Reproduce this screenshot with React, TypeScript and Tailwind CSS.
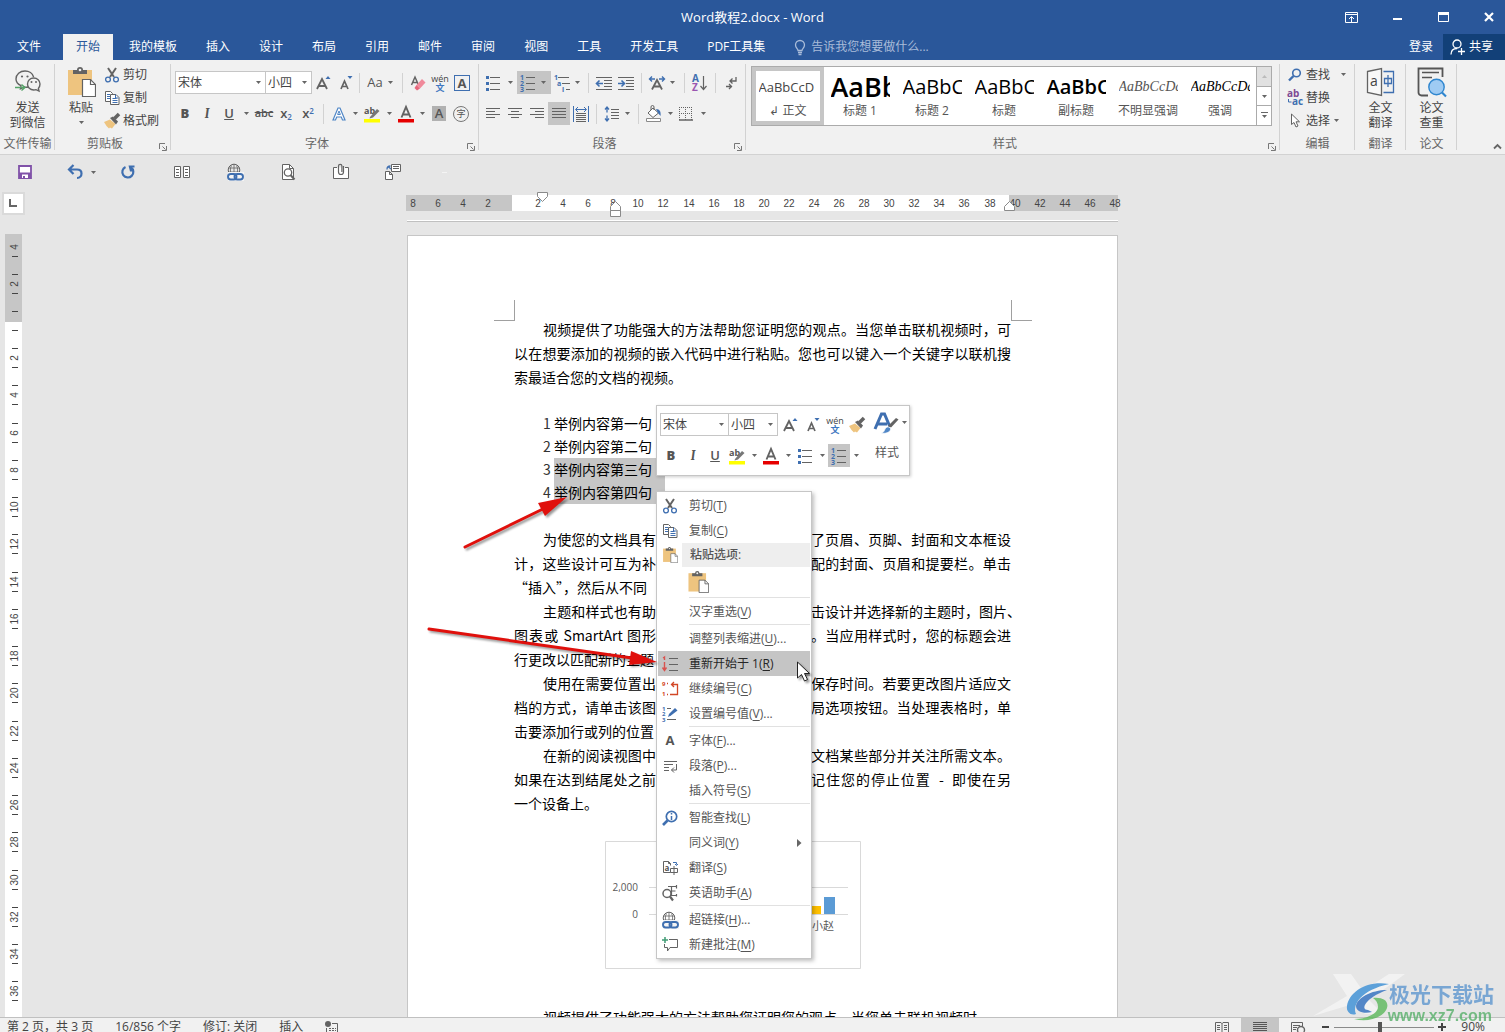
import React from 'react';
import clsx from 'clsx';

type IconProps = { w?: number; h?: number; children: React.ReactNode };

const Svg = ({ w = 16, h = 16, children }: IconProps) => (
  <svg width={w} height={h} viewBox={`0 0 ${w} ${h}`} fill="none" className="shrink-0 overflow-visible" aria-hidden="true">
    {children}
  </svg>
);

const GREY = '#636363';
const BLUE = '#3f6fb0';

/* ---------- Icons ---------- */

const ScissorsIcon = () => (
  <Svg>
    <path d="M4 1l6 9M12 1L6 10" stroke={GREY} strokeWidth="2" />
    <circle cx="4" cy="12.5" r="2.4" stroke={BLUE} strokeWidth="1.3" />
    <circle cx="12" cy="12.5" r="2.4" stroke={BLUE} strokeWidth="1.3" />
  </Svg>
);

const CopyIcon = () => (
  <Svg>
    <path d="M1.5 1.5h5l2 2v8h-7z" fill="#fff" stroke={GREY} />
    <path d="M3 4.5h3M3 6.5h3M3 8.500h3" stroke={BLUE} />
    <path d="M6.500 4.500h5.500l3 3v7h-8.500z" fill="#fff" stroke={GREY} />
    <path d="M11.500 4.500v3.500h3M8.500 8.500h4M8.500 10.500h5M8.500 12.500h5" stroke={BLUE} />
  </Svg>
);

const BrushIcon = () => (
  <Svg>
    <path d="M0 9l6-2.500 5.500 4.500-3.500 4.500-2-1-1 1-2.500-2.500z" fill="#eec47f" />
    <path d="M6 5l3-1.500 5 5-2 3z" fill={GREY} />
    <path d="M10.500 5.500L15 1" stroke={GREY} strokeWidth="3.500" />
  </Svg>
);

const PasteIcon = ({ size = 30 }: { size?: number }) => (
  <svg width={size} height={size} viewBox="0 0 30 30" fill="none" className="shrink-0" aria-hidden="true">
    <path d="M2 3h24v25H2z" fill="#eec47f" />
    <path d="M7 3h4a3 3 0 0 1 6 0h4v4H7z" fill={GREY} />
    <circle cx="14" cy="3" r="1.300" fill="#f1f1f1" />
    <path d="M16.500 12.500h8l5 5v12h-13z" fill="#fff" stroke={GREY} strokeWidth="1.200" />
    <path d="M24.500 12.500v5h5" stroke={GREY} strokeWidth="1.200" />
  </svg>
);

const WechatIcon = () => (
  <Svg w={28} h={26}>
    <path d="M14 18c-1 .3-3 .3-4 0l-3.500 1.700.5-3C3.500 15 2 12.500 2 10c0-4.500 4-8 9-8 4 0 7.600 2.400 8.600 6" stroke={GREY} strokeWidth="1.400" />
    <path d="M26 15c0-3.600-2.800-6-6.300-6S13.500 11.500 13.500 15s2.700 6 6.200 6c.8 0 1.500 0 2.300-.3L25 22l-.6-2.600C25.500 18 26 17 26 15z" stroke={GREY} strokeWidth="1.400" />
    <circle cx="8" cy="7.500" r="1.100" fill={GREY} />
    <circle cx="13.500" cy="7.500" r="1.100" fill={GREY} />
    <circle cx="17.500" cy="13" r="1" fill={GREY} />
    <circle cx="22" cy="13" r="1" fill={GREY} />
    <path d="M1 18.500h9M7.500 15.500l3.500 3-3.500 3" stroke="#55a468" strokeWidth="1.400" />
  </Svg>
);

const EraserIcon = () => (
  <Svg>
    <path d="M1.500 10L5 2l3.500 8M2.800 7.500h4.500" stroke={GREY} strokeWidth="1.500" />
    <path d="M6.500 10L12 4l3.500 3.500L10 13.500z" fill="#f08a9b" />
    <path d="M6.500 10l-2 3 2.500 2.500 3-2z" fill="#e7667c" />
  </Svg>
);

const Pinyin = () => (
  <span className="flex flex-col items-center text-[9px] font-normal leading-[9px] text-[#444]">
    <span>wén</span>
    <span className="font-bold text-[#3f78c0]">文</span>
  </span>
);

const GrowFont = () => (
  <Svg>
    <path d="M1 14L6 4l5 10M3 11h6" stroke={GREY} strokeWidth="1.800" />
    <path d="M9.500 4L12 1l2.500 3z" fill={BLUE} />
  </Svg>
);

const ShrinkFont = () => (
  <Svg>
    <path d="M3 14l3.500-8L10 14M4.500 11.500h4" stroke={GREY} strokeWidth="1.700" />
    <path d="M9.500 1L12 4l2.500-3z" fill={BLUE} />
  </Svg>
);

const BoxedA = () => (
  <span className="flex h-4 w-4 items-center justify-center border border-[#3f6fb0] text-[13px] font-bold leading-[14px]">A</span>
);

const OutlineA = () => (
  <Svg>
    <path d="M2 14L7 2h2l5 12h-2.500l-1.200-3H5.700l-1.200 3z" stroke="#4f86c6" strokeWidth="1.200" fill="#fff" />
    <path d="M6.600 8.500h2.800L8 5z" stroke="#4f86c6" />
  </Svg>
);

const HighlightIcon = () => (
  <Svg w={18} h={18}>
    <text x="1" y="9" fontSize="9" fontWeight="700" fill="#555">ab</text>
    <path d="M7 12l7-8 2.500 2L10 12.500l-3.500 1z" fill="#777" />
    <path d="M1 14h16v3.500H1z" fill="#ff0" />
  </Svg>
);

const FontColorIcon = () => (
  <Svg w={18} h={18}>
    <path d="M4.500 12.500L9 2l4.500 10.500M6.200 9.500h5.600" stroke={GREY} strokeWidth="1.900" />
    <path d="M1 14h16v3.500H1z" fill="#e60000" />
  </Svg>
);

const BulletsIcon = () => (
  <Svg>
    <path d="M5 2.500h10M5 8.500h10M5 14.500h10" stroke={GREY} />
    <path d="M1 1h3v3H1zM1 7h3v3H1zM1 13h3v3H1z" fill={BLUE} />
  </Svg>
);

const NumberingIcon = () => (
  <Svg w={18} h={18}>
    <path d="M7 3.500h9M7 9.500h9M7 15.500h9" stroke={GREY} />
    <g fontSize="7" fontWeight="700" fill={BLUE}>
      <text x="1" y="6">1</text>
      <text x="1" y="12">2</text>
      <text x="1" y="18">3</text>
    </g>
  </Svg>
);

const MultilevelIcon = () => (
  <Svg w={18} h={18}>
    <path d="M5 3.500h11M9 9.500h8M13 15.500h4" stroke={GREY} />
    <g fontSize="7" fontWeight="700" fill={BLUE}>
      <text x="1" y="6">1</text>
      <text x="4" y="12">a</text>
      <text x="9" y="18">i</text>
    </g>
  </Svg>
);

const IndentIcon = ({ out }: { out?: boolean }) => (
  <Svg w={18} h={16}>
    <path d="M1 2.500h16M9 5.500h8M9 8.500h8M9 11.500h8M1 14.500h16" stroke={GREY} />
    <path d={out ? 'M8 8.500H2M4.500 5.500l-3 3 3 3' : 'M1 8.500h6M4.500 5.500l3 3-3 3'} stroke={BLUE} strokeWidth="1.600" />
  </Svg>
);

const AsianLayoutIcon = () => (
  <Svg w={18} h={16}>
    <path d="M4 14.500L9 5l5 9.500M6 11.500h6" stroke={GREY} strokeWidth="1.800" />
    <path d="M7 4H2M4 1.500L1.500 4 4 6.500M11 4h5M14 1.500L16.500 4 14 6.500" stroke={BLUE} strokeWidth="1.400" />
  </Svg>
);

const SortIcon = () => (
  <Svg w={16} h={18}>
    <text x="0" y="8" fontSize="10" fontWeight="700" fill={BLUE}>A</text>
    <text x="0" y="17" fontSize="10" fontWeight="700" fill="#9a56b0">Z</text>
    <path d="M11.500 2v13M8.500 12l3 3.500 3-3.500" stroke={GREY} strokeWidth="1.200" />
  </Svg>
);

const MarksIcon = () => (
  <Svg w={12} h={14}>
    <path d="M11 1v4H5M7.500 2.500L5 5l2.500 2.500M1 10.500h6M4 8l2.500 2.500L4 13" stroke={GREY} strokeWidth="1.300" />
  </Svg>
);

const ALIGN_PATHS = {
  left: 'M1 2.500h14M1 5.500h9M1 8.500h14M1 11.500h9',
  center: 'M1 2.500h14M4 5.500h8M1 8.500h14M4 11.500h8',
  right: 'M1 2.500h14M6 5.500h9M1 8.500h14M6 11.500h9',
  justify: 'M1 2.500h14M1 5.500h14M1 8.500h14M1 11.500h14',
};

const AlignIcon = ({ kind }: { kind: keyof typeof ALIGN_PATHS }) => (
  <Svg h={15}>
    <path d={ALIGN_PATHS[kind]} stroke={GREY} />
  </Svg>
);

const DistributeIcon = () => (
  <Svg>
    <path d="M.5 0v16M15.500 0v16" stroke={BLUE} />
    <path d="M3 7.500h10M3 9.500h10M3 11.500h10M3 13.500h10M3 15.500h10" stroke={GREY} />
    <path d="M3 3.500h10M5 1L2.500 3.500 5 6M11 1l2.500 2.500L11 6" stroke={BLUE} />
  </Svg>
);

const LineSpacingIcon = () => (
  <Svg>
    <path d="M7 3.500h8M7 6.500h8M7 9.500h8M7 12.500h8" stroke={GREY} />
    <path d="M3 1v5.500M1 3.500L3 1l2 2.500M3 9.500V15M1 12.500L3 15l2-2.500" stroke={BLUE} strokeWidth="1.300" />
  </Svg>
);

const BucketIcon = () => (
  <Svg w={18} h={17}>
    <path d="M3 8l5-5 5.500 5-5.500 4.500z" fill="#fff" stroke={GREY} />
    <path d="M6 5V2a1.500 1.500 0 0 1 3 0v3" stroke={GREY} />
    <path d="M11 4c4 0 5 3 4.500 7L13 8z" fill={BLUE} />
    <path d="M1.500 13.500h14v3h-14z" fill="#fff" stroke="#8a8a8a" />
  </Svg>
);

const BordersIcon = () => (
  <Svg w={14} h={14}>
    <path d="M.5 0v13M6.500 0v13M12.500 0v13M0 .5h13M0 6.500h13" stroke={GREY} strokeDasharray="1 1" />
    <path d="M0 13h14" stroke={GREY} strokeWidth="1.500" />
  </Svg>
);

const MagnifierIcon = () => (
  <Svg w={14} h={14}>
    <circle cx="8.500" cy="5" r="3.800" stroke={BLUE} strokeWidth="1.600" />
    <path d="M5.500 8L1 12.500" stroke={BLUE} strokeWidth="2.400" />
  </Svg>
);

const ReplaceIcon = () => (
  <Svg w={17} h={17}>
    <g fontSize="10" fontWeight="700">
      <text x="0" y="8" fill="#7e4a94">ab</text>
      <text x="5" y="16" fill={BLUE}>ac</text>
    </g>
    <path d="M1.500 10v3h3" stroke={BLUE} />
  </Svg>
);

const PointerIcon = () => (
  <Svg w={11} h={15}>
    <path d="M1.500 1v10.500l2.500-2 2 4.500 2-1-2-4.200h3.500z" fill="#fff" stroke={GREY} />
  </Svg>
);

const TranslateIcon = () => (
  <Svg w={30} h={30}>
    <path d="M1.500 4.500l14-3v27l-14-3z" fill="#f8f8f8" stroke={GREY} strokeWidth="1.300" />
    <text x="4" y="19" fontSize="14" fill="#444">a</text>
    <path d="M17.500 4.500h10v21h-10" stroke={BLUE} strokeWidth="1.300" />
    <path d="M18.500 11.500h7v5h-7zM22 8v12" stroke={BLUE} strokeWidth="1.300" />
  </Svg>
);

const PaperCheckIcon = () => (
  <Svg w={30} h={30}>
    <path d="M11 28.500H4.500a3 3 0 0 1-3-3v-24h24V10" stroke="#555" strokeWidth="1.800" />
    <path d="M5 5.500h17M5 10.500h10" stroke="#555" strokeWidth="1.500" />
    <circle cx="19.500" cy="20" r="7.700" fill="#9fcbf3" stroke="#2f86cf" strokeWidth="1.400" />
    <path d="M25 25.500l4 4" stroke="#2f86cf" strokeWidth="2.200" />
  </Svg>
);

const LauncherIcon = () => (
  <Svg w={8} h={8}>
    <path d="M.5 6V.5H6M3.500 3.500L6.500 6.500M7.500 3v4.500H3" stroke="#777" />
  </Svg>
);

const LinkGlobeIcon = () => (
  <Svg w={18} h={18}>
    <circle cx="8" cy="7" r="5.800" stroke={GREY} />
    <path d="M2.500 5h11M2.500 9h11M8 1v12M5.500 2.500C4 5 4 9 5.500 11.500M10.500 2.500C12 5 12 9 10.500 11.500" stroke={GREY} strokeWidth=".8" />
    <path d="M2 9h16v9H2z" fill="#f4f4f4" />
    <rect x="2" y="11" width="8.500" height="5.500" rx="2.700" stroke={BLUE} strokeWidth="1.900" />
    <rect x="8.500" y="11" width="8.500" height="5.500" rx="2.700" stroke={BLUE} strokeWidth="1.900" />
  </Svg>
);

const StyleBrushIcon = () => (
  <Svg w={28} h={24}>
    <path d="M2 18L8.500 3h3L17 16M5 13h9" stroke={BLUE} strokeWidth="3" />
    <path d="M15 15l8-8 2.500 1.500-7.500 8z" fill={GREY} />
    <path d="M8 22c4 0 3-5 6.500-6 2-.3 3.300 1 3 2.500-.5 3-5.500 4.500-9.500 3.500z" fill="#4f86c6" stroke="#fff" strokeWidth=".7" />
  </Svg>
);

/* ---------- Small controls ---------- */

const Caret = ({ className }: { className?: string }) => (
  <span className={clsx('flex h-[23px] items-center justify-center', className ?? 'w-3')}>
    <svg width="5" height="3" viewBox="0 0 5 3" aria-hidden="true">
      <path d="M0 0h5L2.500 3z" fill="#666" />
    </svg>
  </span>
);

const Sep = ({ className }: { className?: string }) => (
  <span className={clsx('h-5 w-px bg-[#d2d2d2]', className ?? 'mx-1')} />
);

type ToolProps = { label: string; active?: boolean; className?: string; children: React.ReactNode };

const Tool = ({ label, active, className, children }: ToolProps) => (
  <button
    type="button"
    aria-label={label}
    className={clsx('flex h-[23px] shrink-0 items-center justify-center', className ?? 'w-[22px]', active && 'bg-[#c5c5c5]')}
  >
    {children}
  </button>
);

const Combo = ({ label, value, className }: { label: string; value: string; className: string }) => (
  <label className={clsx('relative flex h-[23px] border border-[#c6c6c6] bg-white', className)}>
    <select
      aria-label={label}
      defaultValue={value}
      className="w-full appearance-none bg-transparent pl-[2px] text-xs font-normal leading-[21px] text-[#444] outline-none"
    >
      <option>{value}</option>
    </select>
    <span className="pointer-events-none absolute inset-y-0 right-1 flex items-center">
      <Caret className="w-[6px]" />
    </span>
  </label>
);

type GroupProps = { name: string; launcher?: boolean; className?: string; children: React.ReactNode };

const Group = ({ name, launcher, className, children }: GroupProps) => (
  <section aria-label={name} className={clsx('relative flex shrink-0 flex-col', className)}>
    <div className="h-[74px]">{children}</div>
    <div className="flex h-[19px] items-center text-[#666]">
      <span className="flex-1 whitespace-nowrap text-center">{name}</span>
      {launcher && (
        <button type="button" aria-label={`${name}设置`} className="flex h-4 w-4 items-end justify-center pb-px">
          <LauncherIcon />
        </button>
      )}
    </div>
    <span className="absolute right-0 top-1 h-[86px] w-px bg-[#d2d2d2]" />
  </section>
);

const BigButton = ({ icon, lines }: { icon: React.ReactNode; lines: string[] }) => (
  <button type="button" className="flex w-full flex-col items-center pt-[7px] leading-[15px]">
    <span className="mb-[3px] flex h-[30px] items-center">{icon}</span>
    {lines.map((line) => (
      <span key={line} className="whitespace-nowrap">{line}</span>
    ))}
  </button>
);

const SmallButton = ({ icon, text, caret }: { icon: React.ReactNode; text: string; caret?: boolean }) => (
  <button type="button" className="flex h-[23px] items-center gap-[3px] whitespace-nowrap">
    <span className="flex w-4 justify-center">{icon}</span>
    {text}
    {caret && <Caret className="w-[6px]" />}
  </button>
);

/* ---------- Header ---------- */

const tabs = ['我的模板', '插入', '设计', '布局', '引用', '邮件', '审阅', '视图', '工具', '开发工具', 'PDF工具集'];

const Header = () => (
  <header className="bg-[#2a579a] text-white">
    <div className="relative flex h-[34px] items-center justify-end overflow-hidden">
      <h1 className="absolute inset-x-0 text-center text-[13px] leading-[34px]">Word教程2.docx - Word</h1>
      <div className="relative -mr-[7px] flex">
        <button type="button" aria-label="功能区显示选项" className="flex h-8 w-[46px] items-center justify-center">
          <Svg w={13} h={11}>
            <path d="M.5.500h12v10H.5zM.5 2.500h12M6.500 10V5M4 7l2.500-2.500L9 7" stroke="#fff" />
          </Svg>
        </button>
        <button type="button" aria-label="最小化" className="flex h-8 w-[46px] items-center justify-center">
          <Svg w={9} h={10}><path d="M0 7h9" stroke="#fff" strokeWidth="2" /></Svg>
        </button>
        <button type="button" aria-label="最大化" className="flex h-8 w-[46px] items-center justify-center">
          <Svg w={11} h={10}><path d="M.5.500h10v9H.5z" stroke="#fff" /><path d="M0 0h11v3H0z" fill="#fff" /></Svg>
        </button>
        <button type="button" aria-label="关闭" className="flex h-8 w-[46px] items-center justify-center">
          <Svg w={10} h={10}><path d="M1 1l8 8M9 1L1 9" stroke="#fff" strokeWidth="2.200" /></Svg>
        </button>
      </div>
    </div>
    <div className="flex h-[26px] items-stretch whitespace-nowrap">
      <nav className="flex gap-[3px]">
        <button type="button" className="w-[60px] pr-[2px]">文件</button>
        <button type="button" className="bg-[#f1f1f1] px-[13px] text-[#2a579a]">开始</button>
        {tabs.map((tab) => (
          <button key={tab} type="button" className="px-[13px]">{tab}</button>
        ))}
      </nav>
      <label className="ml-4 flex items-center gap-[5px] text-[#a9bcd9]">
        <Svg w={12} h={15}>
          <path d="M4 10.500C4 9 1.500 8 1.500 5a4.500 4.500 0 0 1 9 0c0 3-2.500 4-2.500 5.500zM4 12.500h4M4.500 14.500h3" stroke="#a9bcd9" strokeWidth="1.300" />
        </Svg>
        <input aria-label="告诉我" placeholder="告诉我您想要做什么..." className="w-[130px] bg-transparent text-xs outline-none placeholder:text-[#a9bcd9]" />
      </label>
      <div className="ml-auto flex">
        <button type="button" className="px-[10px]">登录</button>
        <button type="button" className="flex items-center gap-1 bg-[#124078] pl-[7px] pr-3">
          <Svg w={15} h={16}>
            <circle cx="7" cy="5" r="4" stroke="#fff" strokeWidth="1.300" />
            <path d="M1 15.500c0-4 2.500-6 6-6M8 12.500h7M11.500 9v7" stroke="#fff" strokeWidth="1.300" />
          </Svg>
          共享
        </button>
      </div>
    </div>
  </header>
);

/* ---------- Ribbon ---------- */

const styleCells = [
  { name: '↲ 正文', sample: 'AaBbCcD', look: 'text-[13px]', selected: true },
  { name: '标题 1', sample: 'AaBb', look: 'text-[27px] font-semibold text-black' },
  { name: '标题 2', sample: 'AaBbC', look: 'text-[20px] text-black' },
  { name: '标题', sample: 'AaBbC', look: 'text-[20px] text-black' },
  { name: '副标题', sample: 'AaBbC', look: 'text-[20px] font-semibold text-black' },
  { name: '不明显强调', sample: 'AaBbCcDd', look: 'font-["Liberation_Serif"] text-[14px] italic text-[#555]' },
  { name: '强调', sample: 'AaBbCcDd', look: 'font-["Liberation_Serif"] text-[14px] italic text-black' },
];

const Gallery = () => (
  <div className="ml-[5px] mr-[8px] mt-[6px] flex h-[60px] border border-[#ababab] bg-white">
    <div className="flex flex-1 overflow-hidden">
      {styleCells.map((cell) => (
        <button
          key={cell.name}
          type="button"
          className={clsx('flex h-[58px] w-[72px] shrink-0 flex-col items-center', cell.selected && 'border-4 border-[#c6c6c6]')}
        >
          <span className={clsx('w-[59px] overflow-hidden whitespace-nowrap text-left leading-[34px]', cell.selected ? '-mt-px h-[32px]' : 'mt-[3px] h-[32px]', cell.look)}>
            {cell.sample}
          </span>
          <span className="whitespace-nowrap leading-[18px] text-[#555]">{cell.name}</span>
        </button>
      ))}
    </div>
    <div className="flex w-[15px] flex-col divide-y divide-[#ababab] border-l border-[#ababab]">
      <button type="button" aria-label="向上" className="flex flex-1 items-center justify-center bg-[#e1e1e1]">
        <Svg w={5} h={3}><path d="M0 3h5L2.500 0z" fill="#bbb" /></Svg>
      </button>
      <button type="button" aria-label="向下" className="flex flex-1 items-center justify-center">
        <Svg w={5} h={3}><path d="M0 0h5L2.500 3z" fill="#666" /></Svg>
      </button>
      <button type="button" aria-label="更多样式" className="flex flex-1 items-center justify-center">
        <Svg w={7} h={7}><path d="M0 .5h7" stroke="#666" /><path d="M1 3h5L3.500 6z" fill="#666" /></Svg>
      </button>
    </div>
  </div>
);

const FontGroup = () => (
  <Group name="字体" launcher className="w-[308px]">
    <div className="flex flex-col gap-2 pt-[11px] font-semibold text-[#555]">
      <div className="flex h-[23px] items-center pl-[4px]">
        <Combo label="字体" value="宋体" className="w-[91px]" />
        <Combo label="字号" value="小四" className="-ml-px w-[47px]" />
        <Tool label="增大字号" className="ml-[1px] w-[22px]"><GrowFont /></Tool>
        <Tool label="减小字号"><ShrinkFont /></Tool>
        <Sep className="ml-[2px] mr-[4px]" />
        <Tool label="更改大小写"><span className="text-[13px] font-normal">Aa</span></Tool>
        <Caret className="w-2" />
        <Sep className="ml-[8px] mr-[4px]" />
        <Tool label="清除格式"><EraserIcon /></Tool>
        <Tool label="拼音指南"><Pinyin /></Tool>
        <Tool label="字符边框"><BoxedA /></Tool>
      </div>
      <div className="flex h-[23px] items-center pl-[3px] text-[13px]">
        <Tool label="加粗"><b>B</b></Tool>
        <Tool label="倾斜"><i className="font-serif">I</i></Tool>
        <Tool label="下划线"><u>U</u></Tool>
        <Caret className="w-[13px]" />
        <Tool label="删除线"><s className="text-[11px]">abc</s></Tool>
        <Tool label="下标"><span>x<sub className="text-[8px] text-[#3f6fb0]">2</sub></span></Tool>
        <Tool label="上标"><span>x<sup className="text-[8px] text-[#3f6fb0]">2</sup></span></Tool>
        <Sep />
        <Tool label="文本效果"><OutlineA /></Tool>
        <Caret className="w-[11px]" />
        <Tool label="突出显示"><HighlightIcon /></Tool>
        <Caret />
        <Tool label="字体颜色"><FontColorIcon /></Tool>
        <Caret className="w-[11px]" />
        <Tool label="字符底纹"><span className="h-[15px] w-[14px] bg-[#b1b1b1] text-center leading-[15px]">A</span></Tool>
        <Tool label="带圈字符">
          <span className="flex h-4 w-4 items-center justify-center rounded-full border border-[#777] text-[9px] font-normal leading-none">字</span>
        </Tool>
      </div>
    </div>
  </Group>
);

const ParagraphGroup = () => (
  <Group name="段落" launcher className="w-[267px]">
    <div className="flex flex-col gap-2 pl-[3px] pt-[11px]">
      <div className="flex h-[23px] items-center">
        <Tool label="项目符号"><BulletsIcon /></Tool>
        <Caret />
        <Tool label="编号" active className="ml-px w-[34px]"><NumberingIcon /><Caret /></Tool>
        <Tool label="多级列表"><MultilevelIcon /></Tool>
        <Caret className="w-2" />
        <Sep className="ml-[7px] mr-1" />
        <Tool label="减少缩进量"><IndentIcon out /></Tool>
        <Tool label="增加缩进量"><IndentIcon /></Tool>
        <Sep />
        <Tool label="中文版式"><AsianLayoutIcon /></Tool>
        <Caret className="w-2" />
        <Sep className="ml-[8px] mr-1" />
        <Tool label="排序"><SortIcon /></Tool>
        <Sep />
        <Tool label="显示编辑标记"><MarksIcon /></Tool>
      </div>
      <div className="flex h-[23px] items-center">
        <Tool label="左对齐"><AlignIcon kind="left" /></Tool>
        <Tool label="居中"><AlignIcon kind="center" /></Tool>
        <Tool label="右对齐"><AlignIcon kind="right" /></Tool>
        <Tool label="两端对齐" active><AlignIcon kind="justify" /></Tool>
        <Tool label="分散对齐"><DistributeIcon /></Tool>
        <Sep />
        <Tool label="行距"><LineSpacingIcon /></Tool>
        <Caret className="w-2" />
        <Sep className="ml-[7px] mr-1" />
        <Tool label="底纹"><BucketIcon /></Tool>
        <Caret className="w-[10px]" />
        <Tool label="边框"><BordersIcon /></Tool>
        <Caret />
      </div>
    </div>
  </Group>
);

const Ribbon = () => (
  <div className="flex h-[95px] border-b border-[#d2d2d2] bg-[#f1f1f1] text-[#444]">
    <Group name="文件传输" className="w-[55px]">
      <BigButton icon={<WechatIcon />} lines={['发送', '到微信']} />
    </Group>
    <Group name="剪贴板" launcher className="w-[116px]">
      <div className="flex">
        <button type="button" className="ml-[10px] flex w-[32px] flex-col items-center pt-[7px] leading-[15px]">
          <span className="mb-[3px]"><PasteIcon /></span>
          粘贴
          <Caret className="max-h-[14px] w-3" />
        </button>
        <div className="ml-[7px] pt-[3px]">
          <SmallButton icon={<ScissorsIcon />} text="剪切" />
          <SmallButton icon={<CopyIcon />} text="复制" />
          <SmallButton icon={<BrushIcon />} text="格式刷" />
        </div>
      </div>
    </Group>
    <FontGroup />
    <ParagraphGroup />
    <Group name="样式" launcher className="w-[534px]">
      <Gallery />
    </Group>
    <Group name="编辑" className="w-[75px]">
      <div className="pl-[7px] pt-[3px]">
        <button type="button" className="flex h-[23px] items-center gap-[3px]">
          <span className="flex w-4 justify-center"><MagnifierIcon /></span>
          查找
          <Caret className="ml-1 w-3" />
        </button>
        <SmallButton icon={<ReplaceIcon />} text="替换" />
        <SmallButton icon={<PointerIcon />} text="选择" caret />
      </div>
    </Group>
    <Group name="翻译" className="w-[51px]">
      <BigButton icon={<TranslateIcon />} lines={['全文', '翻译']} />
    </Group>
    <Group name="论文" className="w-[51px]">
      <BigButton icon={<PaperCheckIcon />} lines={['论文', '查重']} />
    </Group>
    <button type="button" aria-label="折叠功能区" className="ml-auto self-end pb-1 pr-[3px]">
      <Svg w={9} h={7}><path d="M1 5.500L4.500 2 8 5.500" stroke="#666" strokeWidth="1.800" /></Svg>
    </button>
  </div>
);

const QuickAccess = () => (
  <div className="flex h-[34px] items-center pl-[14px]">
    <Tool label="保存">
      <Svg>
        <path d="M2 2h12v12H2z" fill="#fff" stroke="#8052a8" strokeWidth="1.800" />
        <path d="M2 8.500h12v5H2z" fill="#8052a8" />
        <path d="M5 10.500h6V14H5z" fill="#fff" />
        <path d="M6 12h2v2H6z" fill="#8052a8" />
      </Svg>
    </Tool>
    <Tool label="撤消" className="ml-7 w-[22px]">
      <Svg>
        <path d="M6.500 1L2 5.500 6.500 10M2.500 5.500H10c3 0 4.500 1.800 4.500 4s-1.500 4.500-4.500 4.500" stroke={BLUE} strokeWidth="2.200" />
      </Svg>
    </Tool>
    <Caret className="w-[15px]" />
    <Tool label="恢复" className="ml-[16px] w-[22px]">
      <Svg>
        <path d="M11 3.500A5.500 5.500 0 1 1 5.500 3" stroke={BLUE} strokeWidth="2.200" />
        <path d="M8.500 1.500h6v2h-2.500v4h-2z" fill={BLUE} />
      </Svg>
    </Tool>
    <Tool label="并排" className="ml-8 w-[22px]">
      <Svg w={18} h={14}>
        <path d="M1.500 1.500h6v11h-6zM10.500 1.500h6v11h-6z" fill="#fff" stroke={GREY} />
        <path d="M3 4.500h3M3 7.500h3M3 10.500h3M12 4.500h3M12 7.500h3M12 10.500h3" stroke={GREY} />
      </Svg>
    </Tool>
    <Tool label="超链接" className="ml-[31px] w-[22px]"><LinkGlobeIcon /></Tool>
    <Tool label="打印预览" className="ml-[31px] w-[22px]">
      <Svg w={16} h={18}>
        <path d="M2.500 1.500h7l4 4v11h-11z" fill="#fff" stroke={GREY} />
        <path d="M9.500 1.500v4h4" stroke={GREY} />
        <circle cx="8" cy="9.500" r="3.700" fill="#fff" stroke={GREY} strokeWidth="1.300" />
        <path d="M10.500 12l4 4.500" stroke={GREY} strokeWidth="2" />
      </Svg>
    </Tool>
    <Tool label="附件" className="ml-[31px] w-[22px]">
      <Svg w={18} h={18}>
        <path d="M5 4.500H1.500v11h15v-11H13" fill="#fff" stroke={GREY} />
        <path d="M11.500 3v6a2.500 2.500 0 0 1-5 0V3a1.700 1.700 0 0 1 3.400 0v6" stroke={GREY} strokeWidth="1.200" />
      </Svg>
    </Tool>
    <Tool label="发送" className="ml-[30px] w-[22px]">
      <Svg w={18} h={18}>
        <path d="M7.500 1.500h9v7h-9zM9 3.500h6M9 5.500h6" fill="#fff" stroke={GREY} />
        <path d="M1.500 8.500h4l3 3v5h-7zM5.500 8.500v3h3" fill="#fff" stroke={GREY} />
        <path d="M3 6.500c0-2 1-3.500 3.500-3.500M7 6L4.500 4" stroke={BLUE} strokeWidth="1.300" />
      </Svg>
    </Tool>
    <span className="ml-[38px] h-px w-[5px] bg-[#f4f4f4]" />
  </div>
);

/* ---------- Rulers ---------- */

const H_STEP = 25.08;
const V_STEP = 37.24;

const HorizontalRuler = () => {
  const origin = 107;
  const marks = Array.from({ length: 29 }, (_, i) => i - 4).filter((n) => n !== 0);
  return (
    <svg width="713" height="32" viewBox="0 0 713 32" className="block overflow-visible" role="img" aria-label="水平标尺">
      <path d="M0 5h712v16H0z" fill="#fff" />
      <path d="M0 5h106v16H0zM603 5h109v16H603z" fill="#c6c6c6" />
      <path d="M1 30.500h711" stroke="#fff" />
      <path d="M1 31.500h711" stroke="#c0c0c0" />
      <g fontSize="10" fill="#444" textAnchor="middle" fontFamily="Liberation Sans, sans-serif">
        {marks.map((n) => (
          <text key={n} x={Math.round(origin + n * H_STEP)} y="17">{Math.abs(n) * 2}</text>
        ))}
      </g>
      <g fill="#fff" stroke="#8a8a8a">
        <path d="M131.500 2.500h10v4l-5 5-5-5z" />
        <path d="M204.500 20.500v-4l5-5 5 5v4zM204.500 20.500h10v6h-10z" />
        <path d="M598.500 20.500v-4l5-5 5 5v4z" />
      </g>
    </svg>
  );
};

const VerticalRuler = () => {
  const marks = Array.from({ length: 21 }, (_, i) => i - 2);
  return (
    <svg width="17" height="783" className="mt-[19px] block shrink-0" role="img" aria-label="垂直标尺">
      <path d="M0 0h17v88H0z" fill="#c6c6c6" />
      <path d="M0 88h17v695H0z" fill="#fff" />
      {marks.map((n) => {
        const y = Math.round(87 + n * V_STEP);
        return (
          <g key={n}>
            {n !== 0 && (
              <text transform={`translate(13 ${y}) rotate(-90)`} fontSize="10" fill="#444" textAnchor="middle" fontFamily="Liberation Sans, sans-serif">
                {Math.abs(n) * 2}
              </text>
            )}
            <path d={`M7 ${y + 9}.5h6`} stroke="#444" />
            {n > -2 && <path d={`M7 ${y - 10}.5h6`} stroke="#444" />}
          </g>
        );
      })}
    </svg>
  );
};

/* ---------- Document ---------- */

const intro = [
  '视频提供了功能强大的方法帮助您证明您的观点。当您单击联机视频时，可',
  '以在想要添加的视频的嵌入代码中进行粘贴。您也可以键入一个关键字以联机搜',
  '索最适合您的文档的视频。',
];

const listItems = ['举例内容第一句', '举例内容第二句', '举例内容第三句', '举例内容第四句'];

/* Text to the left and to the right of the open menu */
const body: string[][][] = [
  [
    ['为使您的文档具有', '了页眉、页脚、封面和文本框设'],
    ['计，这些设计可互为补', '配的封面、页眉和提要栏。单击'],
    ['“插入”，然后从不同'],
  ],
  [
    ['主题和样式也有助', '击设计并选择新的主题时，图片、'],
    ['图表或 SmartArt 图形', '。当应用样式时，您的标题会进'],
    ['行更改以匹配新的主题'],
  ],
  [
    ['使用在需要位置出', '保存时间。若要更改图片适应文'],
    ['档的方式，请单击该图', '局选项按钮。当处理表格时，单'],
    ['击要添加行或列的位置'],
  ],
  [
    ['在新的阅读视图中', '文档某些部分并关注所需文本。'],
    ['如果在达到结尾处之前', '记住您的停止位置\u00a0 - \u00a0即使在另'],
    ['一个设备上。'],
  ],
];

const Paragraph = ({ lines }: { lines: string[] }) => (
  <p className="leading-6">
    {lines.map((line, i) => (
      <span
        key={line}
        className={clsx('block h-6', i === 0 && 'pl-[29px]', i < lines.length - 1 && '[text-align-last:justify]')}
      >
        {line}
      </span>
    ))}
  </p>
);

const SplitParagraph = ({ lines }: { lines: string[][] }) => (
  <p className="leading-6">
    {lines.map(([left, right], i) => (
      <span key={left} className="flex h-6 justify-between">
        <span className={clsx(i === 0 && 'pl-[29px]', right && 'w-[142px] [text-align-last:justify]')}>{left}</span>
        {right && <span className="w-[200px] [text-align-last:justify]">{right}</span>}
      </span>
    ))}
  </p>
);

const Chart = () => (
  <svg width="256" height="128" viewBox="0 0 256 128" className="ml-[91px] mt-[26px] block" role="img" aria-label="图表">
    <path d="M.5.500h255v127H.5z" fill="#fff" stroke="#d9d9d9" />
    <path d="M44 46.500h199M44 73.500h199" stroke="#d9d9d9" />
    <path d="M203 65h13v8h-13z" fill="#ffc000" />
    <path d="M219 56h11v17h-11z" fill="#5b9bd5" />
    <g fontSize="10" fill="#595959" fontFamily="Open Sans, Noto Sans CJK SC, sans-serif">
      <text x="33" y="50" textAnchor="end">2,000</text>
      <text x="33" y="77" textAnchor="end">0</text>
      <text x="207" y="89" fontSize="11">小赵</text>
    </g>
  </svg>
);

const MiniToolbar = () => (
  <div className="absolute left-[248px] top-[169px] flex h-[71px] w-[254px] border border-[#c6c6c6] bg-white text-xs text-[#555] shadow-[1px_1px_3px_rgba(0,0,0,0.2)]">
    <div className="flex flex-1 flex-col gap-2 pl-[3px] pt-[7px] font-semibold">
      <div className="flex h-[23px] items-center">
        <Combo label="字体" value="宋体" className="w-[69px]" />
        <Combo label="字号" value="小四" className="-ml-px w-[50px]" />
        <Tool label="增大字号" className="ml-[2px] w-[22px]"><GrowFont /></Tool>
        <Tool label="减小字号"><ShrinkFont /></Tool>
        <Tool label="拼音指南"><Pinyin /></Tool>
        <Tool label="格式刷"><BrushIcon /></Tool>
      </div>
      <div className="flex h-[23px] items-center text-[13px]">
        <Tool label="加粗"><b>B</b></Tool>
        <Tool label="倾斜"><i className="font-serif">I</i></Tool>
        <Tool label="下划线"><u>U</u></Tool>
        <Tool label="突出显示"><HighlightIcon /></Tool>
        <Caret />
        <Tool label="字体颜色"><FontColorIcon /></Tool>
        <Caret />
        <Tool label="项目符号"><BulletsIcon /></Tool>
        <Caret />
        <Tool label="编号" active><NumberingIcon /></Tool>
        <Caret />
      </div>
    </div>
    <span className="my-[3px] w-px bg-[#e1e1e1]" />
    <button type="button" className="flex w-[42px] flex-col items-center pr-[4px] pt-[5px]">
      <span className="flex pl-[6px]"><StyleBrushIcon /><Caret className="w-[6px]" /></span>
      <span className="mt-[9px] leading-[18px]">样式</span>
    </button>
  </div>
);

const NumLines = ({ children }: { children?: React.ReactNode }) => (
  <Svg>
    <g fontSize="6" fontWeight="700" fill={BLUE}>
      <text x="0" y="5">1</text>
      <text x="0" y="10">2</text>
      <text x="0" y="16">3</text>
    </g>
    {children}
  </Svg>
);

type MenuEntry = { text: string; hotkey: string; tail?: string; icon?: React.ReactNode; active?: boolean; arrow?: boolean };

const menuTop: MenuEntry[] = [
  { text: '剪切', hotkey: 'T', icon: <ScissorsIcon /> },
  { text: '复制', hotkey: 'C', icon: <CopyIcon /> },
];

const menuSections: MenuEntry[][] = [
  [{ text: '汉字重选', hotkey: 'V' }],
  [
    { text: '调整列表缩进', hotkey: 'U', tail: '...' },
    {
      text: '重新开始于 1',
      hotkey: 'R',
      active: true,
      icon: (
        <Svg>
          <path d="M7 2.500h9M7 8.500h9M7 14.500h9" stroke={GREY} />
          <path d="M1 2l1.500-1v3M2.500 6v8M.5 11.500l2 3 2-3" stroke="#d9534f" strokeWidth="1.400" />
        </Svg>
      ),
    },
    {
      text: '继续编号',
      hotkey: 'C',
      icon: (
        <Svg>
          <g fontSize="6" fontWeight="700" fill="#d24726">
            <text x="0" y="5">9</text>
            <text x="0" y="15">1</text>
          </g>
          <path d="M5 2.500h1M8 13.500h7.500v-10H10M12 1L9.500 3.500 12 6M5 13.500h1" stroke="#d24726" strokeWidth="1.300" />
        </Svg>
      ),
    },
    {
      text: '设置编号值',
      hotkey: 'V',
      tail: '...',
      icon: (
        <NumLines>
          <path d="M5 2.500h4M5 13.500h9" stroke={GREY} />
          <path d="M6 11l1-3 6-6 2.500 2.500-6.500 5z" fill={BLUE} />
        </NumLines>
      ),
    },
  ],
  [
    { text: '字体', hotkey: 'F', tail: '...', icon: <b className="text-[13px]">A</b> },
    {
      text: '段落',
      hotkey: 'P',
      tail: '...',
      icon: (
        <Svg>
          <path d="M2 3.500h13M2 6.500h9M2 9.500h5M2 12.500h5" stroke={GREY} />
          <path d="M14.500 6v6H9.500M12 9.500L9.500 12l2.500 2.500" stroke={GREY} />
        </Svg>
      ),
    },
    { text: '插入符号', hotkey: 'S' },
  ],
  [
    {
      text: '智能查找',
      hotkey: 'L',
      icon: (
        <Svg>
          <circle cx="9.500" cy="6.500" r="5.200" stroke={BLUE} strokeWidth="1.700" />
          <path d="M5.500 10.500L1 15" stroke={BLUE} strokeWidth="2.600" />
          <path d="M9.500 3v1.500M9.500 6v4" stroke={BLUE} strokeWidth="1.500" />
        </Svg>
      ),
    },
    { text: '同义词', hotkey: 'Y', arrow: true },
    {
      text: '翻译',
      hotkey: 'S',
      icon: (
        <Svg>
          <path d="M8.500 12.500h-7v-11h5l2 2v2M6.500 1.500v2h2" stroke={GREY} />
          <text x="2.500" y="11" fontSize="8" fontWeight="700" fill="#555">a</text>
          <path d="M8.500 8.500h7v4h-7zM12 6v9" stroke={GREY} />
          <path d="M11 2.500h3.500v2M13 4l1.500 1.500L16 4" stroke={BLUE} />
        </Svg>
      ),
    },
    {
      text: '英语助手',
      hotkey: 'A',
      icon: (
        <Svg>
          <circle cx="5" cy="8.500" r="4" stroke={GREY} strokeWidth="1.500" />
          <path d="M8 11.500l3 4" stroke={GREY} strokeWidth="2.200" />
          <path d="M6 1.500h9M9.500 1.500v9H15M9.500 6h4M14.500 0v3.500M14.500 9v2.500" stroke={GREY} strokeWidth="1.200" />
        </Svg>
      ),
    },
  ],
  [
    { text: '超链接', hotkey: 'H', tail: '...', icon: <LinkGlobeIcon /> },
    {
      text: '新建批注',
      hotkey: 'M',
      icon: (
        <Svg>
          <path d="M7 2.500h8.500v8H8L5.500 14v-3.500h-3V7" stroke={GREY} />
          <path d="M3 0v6M0 3h6" stroke="#3f9c74" strokeWidth="1.500" />
        </Svg>
      ),
    },
  ],
];

const MenuRow = ({ text, hotkey, tail, icon, active, arrow }: MenuEntry) => (
  <button
    type="button"
    role="menuitem"
    className={clsx('flex h-[25px] w-full items-center', active ? 'bg-[#c5c5c5] text-[#262626]' : 'text-[#555]')}
  >
    <span className="flex w-6 justify-center">{icon}</span>
    <span className="ml-[7px] whitespace-nowrap">
      {text}(<u className="underline-offset-2">{hotkey}</u>){tail}
    </span>
    {arrow && (
      <span className="ml-auto pr-2">
        <Svg w={5} h={8}><path d="M0 0l4.500 4L0 8z" fill="#666" /></Svg>
      </span>
    )}
  </button>
);

const MenuRule = () => <div className="ml-[31px] h-[2px] border-t border-[#e1e1e1]" />;

const ContextMenu = () => (
  <div
    role="menu"
    className="absolute left-[248px] top-[255px] w-[156px] border border-[#c6c6c6] bg-white p-px text-xs shadow-[2px_2px_4px_rgba(0,0,0,0.25)]"
  >
    {menuTop.map((entry) => <MenuRow key={entry.text} {...entry} />)}
    <div className="flex h-6 items-center font-medium text-[#555]">
      <span className="flex w-6 justify-center"><PasteIcon size={16} /></span>
      <span className="flex h-6 flex-1 items-center bg-[#eee] pl-2">粘贴选项:</span>
    </div>
    <div className="flex h-[30px] items-center pl-[29px]">
      <button type="button" aria-label="粘贴"><PasteIcon size={22} /></button>
    </div>
    {menuSections.map((section) => (
      <div key={section[0].text}>
        <MenuRule />
        {section.map((entry) => <MenuRow key={entry.text} {...entry} />)}
      </div>
    ))}
  </div>
);

/* Red pointers and the mouse cursor lie over the whole page */
const Annotations = () => (
  <svg width="440" height="220" viewBox="0 0 440 220" className="pointer-events-none absolute left-[11px] top-[255px] overflow-visible drop-shadow-[2px_2px_1px_rgba(0,0,0,0.4)]" aria-hidden="true">
    <path d="M46 56L128 16" stroke="#e0100c" strokeWidth="3" strokeLinecap="round" />
    <path d="M148 6l-29 6 7 13z" fill="#e0100c" />
    <path d="M10 138L220 168" stroke="#e0100c" strokeWidth="3" strokeLinecap="round" />
    <path d="M238 171l-26-11-2 14z" fill="#e0100c" />
    <path d="M378.500 171v16l4-3.500 3 6.500 3-1.500-3-6h5z" fill="#fff" stroke="#222" />
  </svg>
);

const Page = () => (
  <article
    lang="zh-CN"
    className="relative h-[800px] w-[711px] max-w-full border border-[#c6c6c6] bg-white px-[106px] pt-[81px] text-[14px] text-black"
  >
    <span className="absolute left-[86px] top-[64px] h-[21px] w-[21px] border-b border-r border-[#a0a0a0]" />
    <span className="absolute right-[85px] top-[64px] h-[21px] w-[21px] border-b border-l border-[#a0a0a0]" />
    <div className="whitespace-nowrap font-['Noto_Sans_CJK_SC',sans-serif]">
      <Paragraph lines={intro} />
      <ol className="my-[23px] leading-[23px]">
        {listItems.map((item, i) => (
          <li key={item} className="flex pl-[29px]">
            <span className="w-[11px] text-[#333]">{i + 1}</span>
            <span className={i > 1 ? 'w-[111px] bg-[#c6c6c6]' : ''}>{item}</span>
          </li>
        ))}
      </ol>
      {body.map((lines) => <SplitParagraph key={lines[0][0]} lines={lines} />)}
      <Chart />
      <div className="mt-[36px]">
        <Paragraph lines={['视频提供了功能强大的方法帮助您证明您的观点。当您单击联机视频时，']} />
      </div>
    </div>
    <MiniToolbar />
    <ContextMenu />
    <Annotations />
  </article>
);

/* ---------- Status bar ---------- */

const Watermark = () => (
  <div className="pointer-events-none absolute bottom-0 right-[11px] flex items-end pb-[6px] opacity-80">
    <svg width="185" height="60" viewBox="0 0 185 60" className="absolute bottom-0 right-0" aria-hidden="true">
      <path d="M24 2h18l12 17L80 2h16L60 28l14 14H56L44 32 4 44l34-20z" fill="#f6f6f6" />
      <path d="M80 12C58 8 40 20 38 34c-1 6 4 10 9 8-4-10 6-24 33-30z" fill="#3a8fd6" />
      <path d="M78 18c-16 0-30 8-31 16 0 6 8 8 16 6l-4-2c-8 0-3-12 19-20z" fill="#2f6fc0" />
      <path d="M64 26c10-1 16 3 14 10-3 9-18 15-33 11 14 0 24-6 24-12 0-4-2-7-5-9z" fill="#5cb85c" />
    </svg>
    <div className="relative text-right">
      <div className="text-[21px] font-bold leading-[24px] text-[#5f97cf]">极光下载站</div>
      <div className="pr-[2px] font-['Liberation_Sans'] text-[16px] font-bold leading-[20px] text-[#58b06b]">www.xz7.com</div>
    </div>
  </div>
);

const StatusBar = () => (
  <footer className="relative h-[15px] shrink-0 overflow-hidden border-t border-[#c0c0c0] bg-[#f1f1f1] text-[#444]">
    <div className="flex h-[18px] items-center whitespace-nowrap pl-[7px] pr-5">
      <div className="flex items-center gap-[22px]">
        <button type="button">第 2 页，共 3 页</button>
        <button type="button">16/856 个字</button>
        <button type="button">修订: 关闭</button>
        <button type="button">插入</button>
        <button type="button" aria-label="宏录制">
          <Svg w={13} h={13}>
            <path d="M7 2.500h5.500v10h-11V7" stroke={GREY} />
            <path d="M4 7.500h7M4 9.500h7M4 11.500h7" stroke={GREY} strokeDasharray="2 1" />
            <circle cx="3" cy="3" r="3" fill={GREY} />
          </Svg>
        </button>
      </div>
      <div className="ml-auto flex items-center">
        <Tool label="阅读视图" className="w-[38px]">
          <Svg w={14} h={13}>
            <path d="M.5 1.500H6l1 1 1-1h5.500v10H8l-1 1-1-1H.5zM7 2v10" stroke={GREY} />
            <path d="M2 4.500h3M2 6.500h3M2 8.500h3M9 4.500h3M9 6.500h3M9 8.500h3" stroke={GREY} />
          </Svg>
        </Tool>
        <Tool label="页面视图" active className="w-[38px]">
          <Svg w={14} h={13}><path d="M0 1.500h14M0 3.500h14M0 5.500h14M0 7.500h14M0 9.500h14M0 11.500h14" stroke="#555" /></Svg>
        </Tool>
        <Tool label="Web 视图" className="w-[38px]">
          <Svg w={14} h={13}>
            <path d="M6 11.500H.5v-10h11V5" stroke={GREY} />
            <path d="M2 4.500h7M2 6.500h4M2 8.500h3" stroke={GREY} />
            <circle cx="10" cy="9" r="3.500" stroke={GREY} strokeWidth="1.400" />
          </Svg>
        </Tool>
        <button type="button" aria-label="缩小" className="ml-[5px] flex h-3 w-3 items-center">
          <Svg w={7} h={2}><path d="M0 1h7" stroke="#444" strokeWidth="2" /></Svg>
        </button>
        <input
          type="range"
          aria-label="缩放"
          min={10}
          max={190}
          defaultValue={91}
          className="h-px w-[100px] appearance-none bg-[#8a8a8a] [&::-webkit-slider-thumb]:h-[11px] [&::-webkit-slider-thumb]:w-1 [&::-webkit-slider-thumb]:appearance-none [&::-webkit-slider-thumb]:bg-[#555]"
        />
        <button type="button" aria-label="放大" className="ml-[4px] flex h-3 w-3 items-center">
          <Svg w={8} h={8}><path d="M0 4h8M4 0v8" stroke="#444" strokeWidth="2" /></Svg>
        </button>
        <button type="button" className="ml-[11px]">90%</button>
      </div>
    </div>
  </footer>
);

const App = () => (
  <div className="relative flex h-screen flex-col overflow-hidden bg-[#e6e6e6] font-['Open_Sans','Noto_Sans_CJK_SC',sans-serif] text-xs">
    <Header />
    <Ribbon />
    <QuickAccess />
    <main className="flex min-h-0 flex-1 overflow-hidden">
      <div className="flex w-[22px] shrink-0 flex-col items-end">
        <button type="button" aria-label="制表符" className="mr-[-3px] mt-[3px] flex h-[23px] w-[23px] shrink-0 items-center justify-center border-2 border-[#dadada] bg-white">
          <Svg w={9} h={9}><path d="M1 0v8M0 7h8" stroke="#666" strokeWidth="2" /></Svg>
        </button>
        <VerticalRuler />
      </div>
      <div className="flex min-w-0 flex-1 flex-col items-center pr-[2px] pt-[1px]">
        <HorizontalRuler />
        <div className="mt-[13px]">
          <Page />
        </div>
      </div>
    </main>
    <StatusBar />
    <Watermark />
  </div>
);

export default App;
